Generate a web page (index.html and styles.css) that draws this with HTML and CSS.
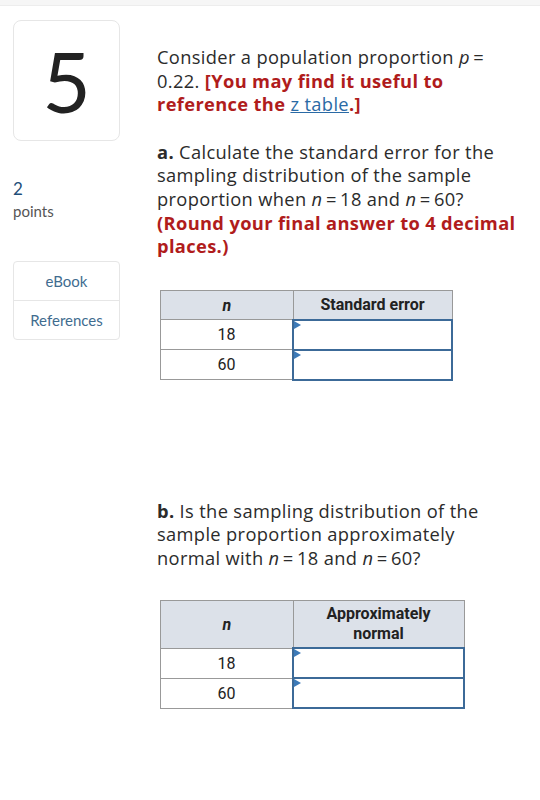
FILE: index.html
```html
<!DOCTYPE html>
<html>
<head>
<meta charset="utf-8">
<link rel="stylesheet" href="styles.css">
</head>
<body>
<div class="topbar"></div>
<div class="page">
  <aside class="side">
    <div class="qnum">5</div>
    <div class="pts"><span class="pts-n">2</span><span class="pts-l">points</span></div>
    <div class="links">
      <div class="link">eBook</div>
      <div class="link">References</div>
    </div>
  </aside>
  <main class="main">
    <p class="para first">Consider a population proportion <i class="var">p</i>&thinsp;=<br>0.22. <b class="red">[You may find it useful to<br>reference the <a class="zlink">z table</a>.]</b></p>
    <p class="para pa"><b>a.</b> Calculate the standard error for the<br>sampling distribution of the sample<br>proportion when <i class="var">n</i>&thinsp;=&thinsp;18 and <i class="var">n</i>&thinsp;=&thinsp;60?<br><b class="red">(Round your final answer to 4 decimal<br>places.)</b></p>
    <table class="tbl t1">
      <tr><th class="c1"><i>n</i></th><th class="c2">Standard error</th></tr>
      <tr><td class="c1">18</td><td class="inp"><span class="flag"></span></td></tr>
      <tr><td class="c1">60</td><td class="inp"><span class="flag"></span></td></tr>
    </table>
    <p class="para pb"><b>b.</b> Is the sampling distribution of the<br>sample proportion approximately<br>normal with <i class="var">n</i>&thinsp;=&thinsp;18 and <i class="var">n</i>&thinsp;=&thinsp;60?</p>
    <table class="tbl t2">
      <tr><th class="c1 tall"><i>n</i></th><th class="c2w">Approximately<br>normal</th></tr>
      <tr><td class="c1">18</td><td class="inp"><span class="flag"></span></td></tr>
      <tr><td class="c1">60</td><td class="inp"><span class="flag"></span></td></tr>
    </table>
  </main>
</div>
</body>
</html>
```
FILE: styles.css
```css
html, body { margin: 0; padding: 0; background: #fff; }
body { font-family: "Open Sans", "Lato", sans-serif; color: #2b2b2b; }
.topbar { height: 5px; background: #f6f6f6; border-bottom: 1px solid #ededed; }
.page { display: flex; padding: 14px 0 0 13px; }
.side { width: 107px; flex: none; }
.qnum {
  height: 121px; border: 1px solid #e6e6e6; border-radius: 8px;
  display: flex; align-items: center; justify-content: center;
  font-family: "Lato", sans-serif;
  font-size: 84px; line-height: 1; color: #222; box-sizing: border-box; font-weight: 400;
}
.pts { display: flex; flex-direction: column; margin-top: 36px; line-height: 23px; font-family: "Lato", sans-serif; }
.pts-n { font-size: 17px; color: #1f4e79; }
.pts-l { font-size: 15px; color: #555; }
.links { margin-top: 38px; border: 1px solid #e6e6e6; border-radius: 4px; font-family: "Lato", sans-serif; }
.link { height: 38px; display: flex; align-items: center; justify-content: center; font-size: 15px; color: #3f6c8f; }
.link + .link { border-top: 1px solid #e6e6e6; }
.main { margin-left: 37px; flex: 1; }
.para { margin: 0; font-size: 18.3px; line-height: 23.6px; white-space: nowrap; letter-spacing: 0.35px; }
.first { margin-top: 25px; }
.pa { margin-top: 24px; }
.red { color: #b01c1c; }
.var { font-style: italic; }
.zlink { color: #2a6aa5; text-decoration: underline; font-weight: 400; }
.tbl { border-collapse: collapse; font-family: "Roboto", sans-serif; font-size: 16px; color: #222; margin-left: 3px; }
.t1 { margin-top: 32px; }
.pb { margin-top: 118px; }
.t2 { margin-top: 30px; }
.tbl th { background: #dce1e9; border: 1px solid #999; font-weight: 700; height: 28px; padding: 0; }
.tbl td { border: 1px solid #999; height: 28px; padding: 0; text-align: center; }
.c1 { width: 131px; }
.c2 { width: 158px; }
.c2w { width: 170px; line-height: 20px; padding: 3px 0 !important; }
.tall { height: 47px !important; }
.tbl td.inp { border: 2px solid #3c6a98; position: relative; }
.flag { position: absolute; left: 0; top: 0; width: 0; height: 0; border-top: 4px solid transparent; border-bottom: 4px solid transparent; border-left: 7px solid #3c7ab8; }
```
